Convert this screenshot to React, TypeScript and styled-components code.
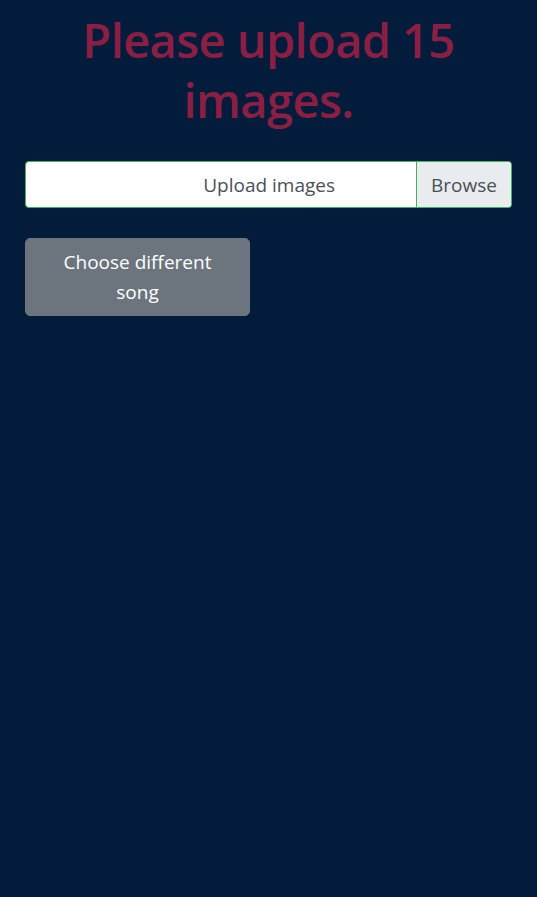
import React from "react";
import styled, { createGlobalStyle } from "styled-components";

const Global = createGlobalStyle`
  html, body { margin: 0; padding: 0; background: #031c3b; }
  body { font-family: "Open Sans", "Noto Sans", sans-serif; }
  * { box-sizing: border-box; }
`;

const Page = styled.div`
  min-height: 897px;
  background: #031c3b;
  padding: 10px 25px 0 25px;
  display: flex;
  flex-direction: column;
`;

const Title = styled.h1`
  margin: 0 0 31px 0;
  text-align: center;
  color: #8b1f43;
  font-size: 47px;
  font-weight: 600;
  line-height: 60px;
  letter-spacing: -0.6px;
`;

const FileGroup = styled.div`
  display: flex;
  height: 47px;
  border: 1px solid #3fb55a;
  border-radius: 4px;
  background: #fff;
  overflow: hidden;
  margin-bottom: 30px;
`;

const FileLabel = styled.div`
  flex: 1;
  display: flex;
  align-items: center;
  justify-content: flex-end;
  padding-right: 81px;
  font-size: 19px;
  color: #495057;
`;

const BrowseButton = styled.div`
  width: 95px;
  display: flex;
  align-items: center;
  justify-content: center;
  background: #e9ecef;
  border-left: 1px solid #3fb55a;
  font-size: 19px;
  color: #495057;
`;

const SecondaryButton = styled.button`
  width: 225px;
  height: 78px;
  padding: 8px 16px;
  border: 1px solid #6c757d;
  border-radius: 5px;
  background: #6c757d;
  color: #fff;
  font-family: inherit;
  font-size: 19px;
  line-height: 30px;
  text-align: center;
`;

export default function App() {
  return (
    <>
      <Global />
      <Page>
        <Title>Please upload 15 images.</Title>
        <FileGroup>
          <FileLabel>Upload images</FileLabel>
          <BrowseButton>Browse</BrowseButton>
        </FileGroup>
        <div>
          <SecondaryButton>Choose different song</SecondaryButton>
        </div>
      </Page>
    </>
  );
}
